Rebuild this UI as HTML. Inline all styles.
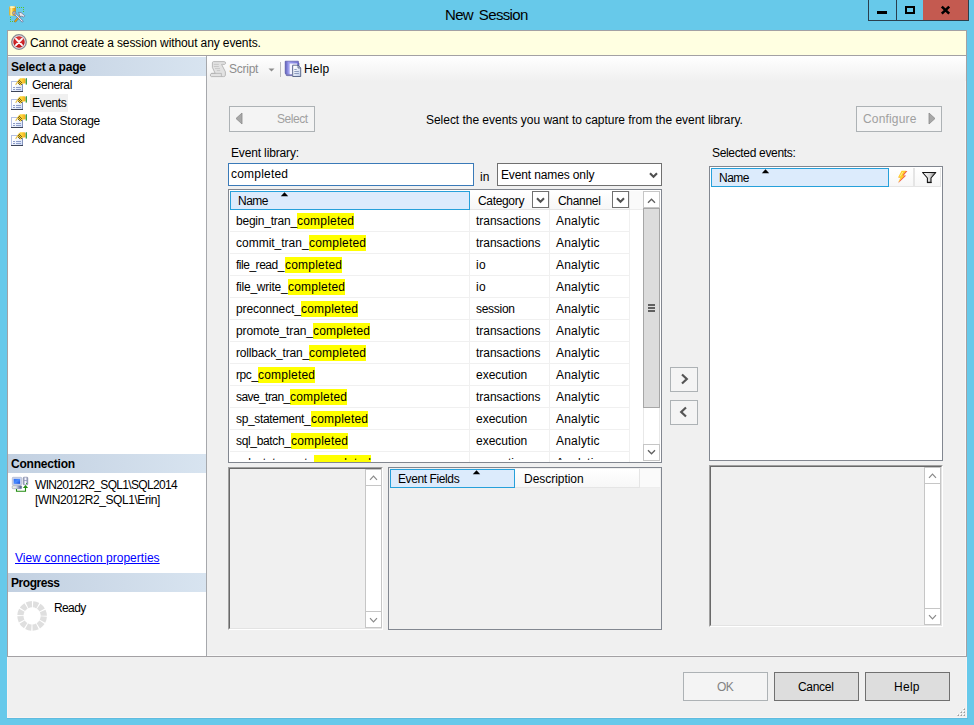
<!DOCTYPE html>
<html lang="en">
<head>
<meta charset="utf-8">
<title>New Session</title>
<style>
html,body{margin:0;padding:0;}
body{width:974px;height:725px;overflow:hidden;background:#67c9ea;font-family:"Liberation Sans",sans-serif;font-size:12px;color:#000;}
#win{position:relative;width:974px;height:725px;overflow:hidden;}
#win div,#win svg{position:absolute;box-sizing:border-box;}
#win .t{white-space:pre;line-height:20px;height:20px;}
#win .hdr{background:linear-gradient(to right,#c2d0e1,#d8e4f0);}
#win .hl{background:#ffff00;}
#win .btn{border:1px solid #707070;background:#dddddd;}
#win .btnd{border:1px solid #adb2b5;background:#f4f4f4;}
#win .hc{background:linear-gradient(#ffffff,#f7f7f7);border-right:1px solid #e5e5e5;border-bottom:1px solid #e5e5e5;}
#win .hsel{background:#dcebfc;border:1px solid #26a0da;}
#win .dd{border:1px solid #707070;background:#fff;}
#win .sunk{border:1px solid;border-color:#a0a0a0 #fff #fff #a0a0a0;background:#f0f0f0;}
#win .sunk2{border:1px solid;border-color:#696969 #e3e3e3 #e3e3e3 #696969;}

#win .sbb{background:#fff;border:1px solid #c6c6c6;}
</style>
</head>
<body>
<div id="win">
<div class="t" style="left:445px;top:5px;font-size:15px;letter-spacing:-0.65px;word-spacing:2.3px;">New Session</div>
<div style="left:868px;top:0px;width:101px;height:21px;border:1px solid #2a3f4d;border-top:none;"></div>
<div style="left:896px;top:0px;width:1px;height:20px;background:#2a3f4d;"></div>
<div style="left:923px;top:0px;width:45px;height:20px;background:#c45a50;"></div>
<div style="left:877px;top:11px;width:10px;height:3px;background:#000;"></div>
<div style="left:905px;top:6px;width:10px;height:8px;border:2px solid #000;border-top-width:2px;"></div>
<svg style="left:940px;top:5px" width="12" height="10" viewBox="0 0 12 10"><path d="M1.8 1.6 L9.2 8.6 M9.2 1.6 L1.8 8.6" stroke="#000" stroke-width="2.6" fill="none"/></svg>
<svg style="left:8px;top:5px" width="18" height="18" viewBox="8 5 18 18"><defs><linearGradient id="gcyl" x1="0" x2="1" y1="0" y2="0"><stop offset="0" stop-color="#e6a40a"/><stop offset="0.3" stop-color="#fff0a0"/><stop offset="0.6" stop-color="#f2bc28"/><stop offset="1" stop-color="#d08a00"/></linearGradient></defs><rect x="9.2" y="6.3" width="6.6" height="9.4" rx="1.3" fill="url(#gcyl)"/><ellipse cx="12.5" cy="7.1" rx="2.9" ry="0.9" fill="#fff6c4"/><rect x="17" y="7" width="1" height="1" fill="#58c22e"/><rect x="19" y="7" width="1" height="1" fill="#58c22e"/><rect x="21" y="7" width="1" height="1" fill="#58c22e"/><rect x="23" y="7" width="1" height="1" fill="#58c22e"/><rect x="23" y="9" width="1" height="1" fill="#58c22e"/><rect x="23" y="11" width="1" height="1" fill="#58c22e"/><rect x="10" y="17" width="1" height="1" fill="#58c22e"/><rect x="10" y="19" width="1" height="1" fill="#58c22e"/><rect x="10" y="21" width="1" height="1" fill="#58c22e"/><rect x="12" y="21" width="1" height="1" fill="#58c22e"/><path d="M15.2 21.3 L19.6 16.4" stroke="#7a5a10" stroke-width="2" stroke-linecap="round"/><path d="M15.2 21.3 L19.6 16.4" stroke="#f0b020" stroke-width="1.1" stroke-linecap="round"/><path d="M14.6 13.4 L22.3 21.2" stroke="#5a6890" stroke-width="2.2" stroke-linecap="round"/><path d="M14.8 13.6 L22.2 21.1" stroke="#eef0fa" stroke-width="1.1" stroke-linecap="round"/><circle cx="14.3" cy="13.1" r="1.7" fill="#aab4d4" stroke="#6a78a0" stroke-width="0.6"/><circle cx="14.4" cy="13.3" r="0.7" fill="#f0a018"/><path d="M18.4 12.4 q3 -0.6 4.6 1.8 l1.8 1.6 l-1.2 1.4 l-1.6 -1 q-1.6 0.6 -2.6 -0.6 q0.4 -1.8 -1 -3.2z" fill="#e8e8f0" stroke="#68708c" stroke-width="0.7"/></svg>
<div style="left:7px;top:30px;width:960px;height:627px;background:#f0f0f0;border:1px solid #a3a1a4;"></div>
<div style="left:7px;top:657px;width:960px;height:61px;background:#f0f0f0;border:1px solid #f9f3f2;border-top:none;"></div>
<div style="left:7px;top:718px;width:961px;height:1px;background:#5fbbdf;"></div>
<div style="left:7px;top:30px;width:960px;height:26px;background:#ffffe1;border:1px solid #a3a1a4;"></div>
<svg style="left:10px;top:33px" width="18" height="18" viewBox="10 33 18 18"><defs><radialGradient id="gerr" cx="0.5" cy="0.35" r="0.7"><stop offset="0" stop-color="#e44a4a"/><stop offset="1" stop-color="#b80808"/></radialGradient></defs><circle cx="19" cy="42" r="7.3" fill="#e4e4ea" stroke="#8a8a92" stroke-width="1.3"/><circle cx="19" cy="42" r="5.7" fill="url(#gerr)"/><path d="M16 38.8 L22 45.2 M22 38.8 L16 45.2" stroke="#fff" stroke-width="1.9" stroke-linecap="round"/></svg>
<div class="t" style="left:30px;top:33px;letter-spacing:-0.11px;">Cannot create a session without any events.</div>
<div style="left:8px;top:56px;width:198px;height:600px;background:#fff;"></div>
<div style="left:206px;top:56px;width:1px;height:601px;background:#a6a8ac;"></div>
<div class="hdr" style="left:8px;top:57px;width:198px;height:19px;"></div>
<div class="t" style="left:11px;top:57px;font-weight:700;letter-spacing:-0.14px;">Select a page</div>
<svg style="left:10px;top:77px" width="18" height="16" viewBox="10 77 18 16"><defs><linearGradient id="gpg0" x1="0" x2="1" y1="0" y2="1"><stop offset="0.3" stop-color="#ffffff"/><stop offset="1" stop-color="#ccdaf8"/></linearGradient><linearGradient id="ghd0" x1="0" x2="1" y1="0" y2="0"><stop offset="0" stop-color="#d8b040"/><stop offset="0.6" stop-color="#ffd83a"/><stop offset="1" stop-color="#f0a818"/></linearGradient></defs><g transform="translate(0 0)"><rect x="11.5" y="81.5" width="11" height="10" fill="url(#gpg0)" stroke="#b4c0e4" stroke-width="1"/><path d="M11 91.5 H23" stroke="#3c4458" stroke-width="1"/><path d="M22.5 84 V91" stroke="#8494bc" stroke-width="1"/><path d="M13 87.5h2M16 87.5h5M13 89.5h2M16 89.5h5" stroke="#8c9cc8" stroke-width="1"/><path d="M15.2 84.6 L18.6 79.6 L20.2 78.2 L24.6 78.2 L25.6 79.4 L25.6 83.2 L22.4 83.8 L20.6 85.8 L19.2 84 L17.4 83 L16.2 85 z" fill="url(#ghd0)"/><rect x="19" y="80" width="1" height="1" fill="#4a3c14" opacity="0.75"/><rect x="20" y="81" width="1" height="1" fill="#4a3c14" opacity="0.75"/><rect x="18" y="81" width="1" height="1" fill="#4a3c14" opacity="0.75"/><rect x="19" y="82" width="1" height="1" fill="#4a3c14" opacity="0.75"/><rect x="21" y="82" width="1" height="1" fill="#4a3c14" opacity="0.75"/><rect x="20" y="83" width="1" height="1" fill="#4a3c14" opacity="0.75"/><rect x="19" y="84" width="1" height="1" fill="#4a3c14" opacity="0.75"/><rect x="18" y="83" width="1" height="1" fill="#4a3c14" opacity="0.75"/><rect x="21" y="84" width="1" height="1" fill="#4a3c14" opacity="0.75"/><rect x="25.7" y="78.2" width="1.2" height="6.4" fill="#2a9636"/></g></svg>
<svg style="left:10px;top:95px" width="18" height="16" viewBox="10 95 18 16"><defs><linearGradient id="gpg1" x1="0" x2="1" y1="0" y2="1"><stop offset="0.3" stop-color="#ffffff"/><stop offset="1" stop-color="#ccdaf8"/></linearGradient><linearGradient id="ghd1" x1="0" x2="1" y1="0" y2="0"><stop offset="0" stop-color="#d8b040"/><stop offset="0.6" stop-color="#ffd83a"/><stop offset="1" stop-color="#f0a818"/></linearGradient></defs><g transform="translate(0 18)"><rect x="11.5" y="81.5" width="11" height="10" fill="url(#gpg1)" stroke="#b4c0e4" stroke-width="1"/><path d="M11 91.5 H23" stroke="#3c4458" stroke-width="1"/><path d="M22.5 84 V91" stroke="#8494bc" stroke-width="1"/><path d="M13 87.5h2M16 87.5h5M13 89.5h2M16 89.5h5" stroke="#8c9cc8" stroke-width="1"/><path d="M15.2 84.6 L18.6 79.6 L20.2 78.2 L24.6 78.2 L25.6 79.4 L25.6 83.2 L22.4 83.8 L20.6 85.8 L19.2 84 L17.4 83 L16.2 85 z" fill="url(#ghd1)"/><rect x="19" y="80" width="1" height="1" fill="#4a3c14" opacity="0.75"/><rect x="20" y="81" width="1" height="1" fill="#4a3c14" opacity="0.75"/><rect x="18" y="81" width="1" height="1" fill="#4a3c14" opacity="0.75"/><rect x="19" y="82" width="1" height="1" fill="#4a3c14" opacity="0.75"/><rect x="21" y="82" width="1" height="1" fill="#4a3c14" opacity="0.75"/><rect x="20" y="83" width="1" height="1" fill="#4a3c14" opacity="0.75"/><rect x="19" y="84" width="1" height="1" fill="#4a3c14" opacity="0.75"/><rect x="18" y="83" width="1" height="1" fill="#4a3c14" opacity="0.75"/><rect x="21" y="84" width="1" height="1" fill="#4a3c14" opacity="0.75"/><rect x="25.7" y="78.2" width="1.2" height="6.4" fill="#2a9636"/></g></svg>
<svg style="left:10px;top:113px" width="18" height="16" viewBox="10 113 18 16"><defs><linearGradient id="gpg2" x1="0" x2="1" y1="0" y2="1"><stop offset="0.3" stop-color="#ffffff"/><stop offset="1" stop-color="#ccdaf8"/></linearGradient><linearGradient id="ghd2" x1="0" x2="1" y1="0" y2="0"><stop offset="0" stop-color="#d8b040"/><stop offset="0.6" stop-color="#ffd83a"/><stop offset="1" stop-color="#f0a818"/></linearGradient></defs><g transform="translate(0 36)"><rect x="11.5" y="81.5" width="11" height="10" fill="url(#gpg2)" stroke="#b4c0e4" stroke-width="1"/><path d="M11 91.5 H23" stroke="#3c4458" stroke-width="1"/><path d="M22.5 84 V91" stroke="#8494bc" stroke-width="1"/><path d="M13 87.5h2M16 87.5h5M13 89.5h2M16 89.5h5" stroke="#8c9cc8" stroke-width="1"/><path d="M15.2 84.6 L18.6 79.6 L20.2 78.2 L24.6 78.2 L25.6 79.4 L25.6 83.2 L22.4 83.8 L20.6 85.8 L19.2 84 L17.4 83 L16.2 85 z" fill="url(#ghd2)"/><rect x="19" y="80" width="1" height="1" fill="#4a3c14" opacity="0.75"/><rect x="20" y="81" width="1" height="1" fill="#4a3c14" opacity="0.75"/><rect x="18" y="81" width="1" height="1" fill="#4a3c14" opacity="0.75"/><rect x="19" y="82" width="1" height="1" fill="#4a3c14" opacity="0.75"/><rect x="21" y="82" width="1" height="1" fill="#4a3c14" opacity="0.75"/><rect x="20" y="83" width="1" height="1" fill="#4a3c14" opacity="0.75"/><rect x="19" y="84" width="1" height="1" fill="#4a3c14" opacity="0.75"/><rect x="18" y="83" width="1" height="1" fill="#4a3c14" opacity="0.75"/><rect x="21" y="84" width="1" height="1" fill="#4a3c14" opacity="0.75"/><rect x="25.7" y="78.2" width="1.2" height="6.4" fill="#2a9636"/></g></svg>
<svg style="left:10px;top:131px" width="18" height="16" viewBox="10 131 18 16"><defs><linearGradient id="gpg3" x1="0" x2="1" y1="0" y2="1"><stop offset="0.3" stop-color="#ffffff"/><stop offset="1" stop-color="#ccdaf8"/></linearGradient><linearGradient id="ghd3" x1="0" x2="1" y1="0" y2="0"><stop offset="0" stop-color="#d8b040"/><stop offset="0.6" stop-color="#ffd83a"/><stop offset="1" stop-color="#f0a818"/></linearGradient></defs><g transform="translate(0 54)"><rect x="11.5" y="81.5" width="11" height="10" fill="url(#gpg3)" stroke="#b4c0e4" stroke-width="1"/><path d="M11 91.5 H23" stroke="#3c4458" stroke-width="1"/><path d="M22.5 84 V91" stroke="#8494bc" stroke-width="1"/><path d="M13 87.5h2M16 87.5h5M13 89.5h2M16 89.5h5" stroke="#8c9cc8" stroke-width="1"/><path d="M15.2 84.6 L18.6 79.6 L20.2 78.2 L24.6 78.2 L25.6 79.4 L25.6 83.2 L22.4 83.8 L20.6 85.8 L19.2 84 L17.4 83 L16.2 85 z" fill="url(#ghd3)"/><rect x="19" y="80" width="1" height="1" fill="#4a3c14" opacity="0.75"/><rect x="20" y="81" width="1" height="1" fill="#4a3c14" opacity="0.75"/><rect x="18" y="81" width="1" height="1" fill="#4a3c14" opacity="0.75"/><rect x="19" y="82" width="1" height="1" fill="#4a3c14" opacity="0.75"/><rect x="21" y="82" width="1" height="1" fill="#4a3c14" opacity="0.75"/><rect x="20" y="83" width="1" height="1" fill="#4a3c14" opacity="0.75"/><rect x="19" y="84" width="1" height="1" fill="#4a3c14" opacity="0.75"/><rect x="18" y="83" width="1" height="1" fill="#4a3c14" opacity="0.75"/><rect x="21" y="84" width="1" height="1" fill="#4a3c14" opacity="0.75"/><rect x="25.7" y="78.2" width="1.2" height="6.4" fill="#2a9636"/></g></svg>
<div style="left:30px;top:94px;width:38px;height:18px;background:#f0f0f0;"></div>
<div class="t" style="left:32px;top:75px;letter-spacing:-0.4px;">General</div>
<div class="t" style="left:32px;top:93px;letter-spacing:-0.38px;">Events</div>
<div class="t" style="left:32px;top:111px;letter-spacing:-0.22px;">Data Storage</div>
<div class="t" style="left:32px;top:129px;letter-spacing:-0.06px;">Advanced</div>
<div class="hdr" style="left:8px;top:454px;width:198px;height:19px;"></div>
<div class="t" style="left:11px;top:454px;font-weight:700;letter-spacing:-0.21px;">Connection</div>
<svg style="left:11px;top:476px" width="18" height="17" viewBox="11 476 18 17"><defs><linearGradient id="gscr" x1="0" x2="1" y1="0" y2="1"><stop offset="0" stop-color="#2a6cf4"/><stop offset="0.5" stop-color="#4a8cff"/><stop offset="1" stop-color="#1448d8"/></linearGradient><linearGradient id="gbase" x1="0" x2="1" y1="0" y2="0"><stop offset="0" stop-color="#f4f4d8"/><stop offset="0.4" stop-color="#dfe3f0"/><stop offset="1" stop-color="#3c4e80"/></linearGradient><linearGradient id="gtow" x1="0" x2="1" y1="0" y2="0"><stop offset="0" stop-color="#8890b0"/><stop offset="0.5" stop-color="#f4f4ff"/><stop offset="1" stop-color="#8088a8"/></linearGradient></defs><rect x="12.3" y="477.3" width="9.4" height="7.8" rx="0.8" fill="#ccd4ec" stroke="#a4acc8" stroke-width="0.6"/><rect x="13.7" y="478.9" width="6.4" height="4.9" fill="url(#gscr)"/><rect x="12.2" y="485.7" width="9.5" height="3" rx="0.8" fill="url(#gbase)" stroke="#7c88a8" stroke-width="0.5"/><rect x="23.2" y="477.2" width="4.6" height="7.6" rx="0.8" fill="url(#gtow)" stroke="#7880a0" stroke-width="0.6"/><path d="M24 480.5h3" stroke="#9098b8" stroke-width="0.8"/><rect x="26" y="483" width="1" height="1" fill="#3ab030"/><path d="M16.5 489 V491.3 H25.5 V486" stroke="#228c10" stroke-width="1.1" fill="none"/><path d="M22.9 488 L25.5 485 L28.1 488z" fill="#228c10"/></svg>
<div class="t" style="left:35px;top:475px;letter-spacing:-0.67px;">WIN2012R2_SQL1\SQL2014</div>
<div class="t" style="left:35px;top:490px;letter-spacing:-0.44px;">[WIN2012R2_SQL1\Erin]</div>
<div class="t" style="left:15px;top:548px;color:#0000ff;letter-spacing:0.03px;text-decoration:underline;">View connection properties</div>
<div class="hdr" style="left:8px;top:573px;width:198px;height:19px;"></div>
<div class="t" style="left:11px;top:573px;font-weight:700;letter-spacing:-0.44px;">Progress</div>
<svg style="left:16px;top:600px" width="32" height="32" viewBox="-16 -16 32 32"><circle cx="0.1" cy="-0.1" r="11.7" fill="none" stroke="#dfdfdf" stroke-width="6.2" stroke-dasharray="5.0 1.126" transform="rotate(2.8)"/></svg>
<div class="t" style="left:54px;top:598px;letter-spacing:-0.62px;">Ready</div>
<div style="left:207px;top:56px;width:759px;height:25px;background:linear-gradient(#ffffff,#f0f0f0);"></div>
<svg style="left:209px;top:60px" width="18" height="18" viewBox="209 60 18 18"><path d="M213.5 61.6 H224 Q226 61.8 225.6 63.6 Q225 64.8 222.6 64.4 L221.6 64.4 L225.4 71.8 V75.2 Q225.2 76.6 223.6 76.6 H211.2 Q210.2 76.4 210.4 74.8 Q210.6 73.4 211.8 73.4 H215.2 L212.4 67.4 V62.8 Q212.6 61.6 213.5 61.6z" fill="#e2e2e2" stroke="#b2b2b2" stroke-width="0.9" stroke-linejoin="round"/><path d="M213.8 64.4h5M213.8 66.5h5M215 68.6h5M216.8 70.6h3.4" stroke="#c2c2c2" stroke-width="0.8"/><path d="M211 73.4 H221.4 V76.4" stroke="#b2b2b2" stroke-width="0.8" fill="none"/></svg>
<div class="t" style="left:229px;top:59px;color:#8d8d8d;letter-spacing:-0.26px;">Script</div>
<svg style="left:268px;top:68px" width="7" height="4" viewBox="0 0 7 4"><path d="M0.5 0.5 h6 l-3 3z" fill="#8d8d8d"/></svg>
<div style="left:280px;top:62px;width:1px;height:15px;background:#bdbdbd;"></div>
<svg style="left:284px;top:60px" width="18" height="18" viewBox="284 60 18 18"><defs><linearGradient id="gbk" x1="0" x2="1" y1="0" y2="0"><stop offset="0" stop-color="#5e5eb8"/><stop offset="0.25" stop-color="#a0a0f0"/><stop offset="1" stop-color="#7070d0"/></linearGradient><linearGradient id="gdoc" x1="0" x2="1" y1="0" y2="1"><stop offset="0.2" stop-color="#ffffff"/><stop offset="1" stop-color="#b8c8e8"/></linearGradient></defs><path d="M285.2 61.2 H298.4 V63 H299 V70 H292 V74.4 H286.4 Q285.2 74.2 285.2 73z" fill="url(#gbk)" stroke="#4a4aa0" stroke-width="0.6"/><path d="M286 74.6 Q286 75.6 287 75.6 H292.4" stroke="#4a4a98" stroke-width="0.8" fill="none"/><path d="M289.6 63.4 H297.2 V66 H292.4 V74.2 H289.6z" fill="#f4f4ff"/><path d="M292.7 65.2 H298 L300.7 68 V76.5 H292.7z" fill="url(#gdoc)" stroke="#3c4c74" stroke-width="0.8" stroke-linejoin="round"/><path d="M298 65.2 V68 H300.7" fill="none" stroke="#3c4c74" stroke-width="0.7"/><path d="M294.3 69.5h2.4M294.3 71.5h4.6M294.3 73.5h4.6" stroke="#8494b8" stroke-width="0.9"/></svg>
<div class="t" style="left:304px;top:59px;letter-spacing:0.17px;">Help</div>
<div class="btnd" style="left:229px;top:106px;width:86px;height:26px;"></div>
<svg style="left:235px;top:112px" width="8" height="13" viewBox="0 0 8 13"><path d="M7 1 L1 6.5 L7 12z" fill="#a8a8a8" stroke="#8a8a8a" stroke-width="0.8"/></svg>
<div class="t" style="left:277px;top:109px;color:#a0a0a0;letter-spacing:-0.46px;">Select</div>
<div class="t" style="left:426px;top:110px;letter-spacing:-0.03px;">Select the events you want to capture from the event library.</div>
<div class="btnd" style="left:856px;top:106px;width:86px;height:26px;"></div>
<svg style="left:928px;top:112px" width="8" height="13" viewBox="0 0 8 13"><path d="M1 1 L7 6.5 L1 12z" fill="#a8a8a8" stroke="#8a8a8a" stroke-width="0.8"/></svg>
<div class="t" style="left:863px;top:109px;color:#a0a0a0;letter-spacing:0.16px;">Configure</div>
<div class="t" style="left:231px;top:143px;letter-spacing:-0.15px;">Event library:</div>
<div class="t" style="left:712px;top:143px;letter-spacing:-0.33px;">Selected events:</div>
<div style="left:228px;top:163px;width:246px;height:23px;background:#fff;border:1px solid #3a7ab8;"></div>
<div class="t" style="left:231px;top:164px;letter-spacing:0.21px;">completed</div>
<div class="t" style="left:480px;top:167px;letter-spacing:0.1px;">in</div>
<div style="left:497px;top:163px;width:165px;height:23px;background:#fff;border:1px solid #707070;"></div>
<div class="t" style="left:501px;top:165px;letter-spacing:-0.13px;">Event names only</div>
<svg style="left:649px;top:171.5px" width="9" height="7" viewBox="0 0 9 7"><path d="M1 1.2 L4.5 4.8 L8 1.2" stroke="#505050" stroke-width="2.1" fill="none"/></svg>
<div style="left:228px;top:189px;width:434px;height:274px;background:#fff;border:1px solid #828790;"></div>
<div style="left:230px;top:191px;width:413px;height:19px;background:#fafafa;border-bottom:1px solid #ededed;"></div>
<div class="hsel" style="left:230px;top:191px;width:240px;height:19px;"></div>
<div class="hc" style="left:470px;top:191px;width:80px;height:19px;"></div>
<div class="hc" style="left:550px;top:191px;width:80px;height:19px;"></div>
<div class="t" style="left:238px;top:191px;letter-spacing:-0.54px;">Name</div>
<div class="t" style="left:478px;top:191px;letter-spacing:-0.33px;">Category</div>
<div class="t" style="left:558px;top:191px;letter-spacing:-0.3px;">Channel</div>
<svg style="left:280px;top:192px" width="9" height="5" viewBox="0 0 9 5"><path d="M0.8 4.2 L4.5 0.3 L8.2 4.2z" fill="#000"/></svg>
<div class="dd" style="left:532px;top:191px;width:17px;height:17px;"></div>
<svg style="left:536px;top:197px" width="9" height="7" viewBox="0 0 9 7"><path d="M1 1.2 L4.5 4.8 L8 1.2" stroke="#505050" stroke-width="2.0" fill="none"/></svg>
<div class="dd" style="left:612px;top:191px;width:17px;height:17px;"></div>
<svg style="left:616px;top:197px" width="9" height="7" viewBox="0 0 9 7"><path d="M1 1.2 L4.5 4.8 L8 1.2" stroke="#505050" stroke-width="2.0" fill="none"/></svg>
<div style="left:229px;top:210px;width:414px;height:252px;overflow:hidden;">
<div style="left:1px;top:21px;width:400px;height:1px;background:#f0f0f0;"></div>
<div style="left:1px;top:43px;width:400px;height:1px;background:#f0f0f0;"></div>
<div style="left:1px;top:65px;width:400px;height:1px;background:#f0f0f0;"></div>
<div style="left:1px;top:87px;width:400px;height:1px;background:#f0f0f0;"></div>
<div style="left:1px;top:109px;width:400px;height:1px;background:#f0f0f0;"></div>
<div style="left:1px;top:131px;width:400px;height:1px;background:#f0f0f0;"></div>
<div style="left:1px;top:153px;width:400px;height:1px;background:#f0f0f0;"></div>
<div style="left:1px;top:175px;width:400px;height:1px;background:#f0f0f0;"></div>
<div style="left:1px;top:197px;width:400px;height:1px;background:#f0f0f0;"></div>
<div style="left:1px;top:219px;width:400px;height:1px;background:#f0f0f0;"></div>
<div style="left:1px;top:241px;width:400px;height:1px;background:#f0f0f0;"></div>
<div style="left:1px;top:263px;width:400px;height:1px;background:#f0f0f0;"></div>
<div style="left:240px;top:0px;width:1px;height:252px;background:#f0f0f0;"></div>
<div style="left:320px;top:0px;width:1px;height:252px;background:#f0f0f0;"></div>
<div style="left:400px;top:0px;width:1px;height:252px;background:#f0f0f0;"></div>
</div>
<div style="left:0;top:0;width:974px;height:462px;overflow:hidden;">
<div class="hl" style="left:297px;top:213px;width:57px;height:16px;"></div>
<div class="hl" style="left:309px;top:235px;width:57px;height:16px;"></div>
<div class="hl" style="left:285px;top:257px;width:57px;height:16px;"></div>
<div class="hl" style="left:288px;top:279px;width:57px;height:16px;"></div>
<div class="hl" style="left:301px;top:301px;width:57px;height:16px;"></div>
<div class="hl" style="left:313px;top:323px;width:57px;height:16px;"></div>
<div class="hl" style="left:309px;top:345px;width:57px;height:16px;"></div>
<div class="hl" style="left:258px;top:367px;width:57px;height:16px;"></div>
<div class="hl" style="left:290px;top:389px;width:57px;height:16px;"></div>
<div class="hl" style="left:311px;top:411px;width:57px;height:16px;"></div>
<div class="hl" style="left:291px;top:433px;width:57px;height:16px;"></div>
<div class="hl" style="left:314px;top:455px;width:57px;height:16px;"></div>
</div>
<div style="left:0;top:0;width:974px;height:460px;overflow:hidden;">
<div class="t" style="left:236px;top:211px;letter-spacing:-0.22px;">begin_tran_</div>
<div class="t" style="left:297px;top:211px;letter-spacing:0.21px;">completed</div>
<div class="t" style="left:476px;top:211px;letter-spacing:-0.02px;">transactions</div>
<div class="t" style="left:556px;top:211px;letter-spacing:0.22px;">Analytic</div>
<div class="t" style="left:236px;top:233px;letter-spacing:-0.01px;">commit_tran_</div>
<div class="t" style="left:309px;top:233px;letter-spacing:0.21px;">completed</div>
<div class="t" style="left:476px;top:233px;letter-spacing:-0.02px;">transactions</div>
<div class="t" style="left:556px;top:233px;letter-spacing:0.22px;">Analytic</div>
<div class="t" style="left:236px;top:255px;letter-spacing:-0.48px;">file_read_</div>
<div class="t" style="left:285px;top:255px;letter-spacing:0.21px;">completed</div>
<div class="t" style="left:476px;top:255px;letter-spacing:0.45px;">io</div>
<div class="t" style="left:556px;top:255px;letter-spacing:0.22px;">Analytic</div>
<div class="t" style="left:236px;top:277px;letter-spacing:-0.23px;">file_write_</div>
<div class="t" style="left:288px;top:277px;letter-spacing:0.21px;">completed</div>
<div class="t" style="left:476px;top:277px;letter-spacing:0.45px;">io</div>
<div class="t" style="left:556px;top:277px;letter-spacing:0.22px;">Analytic</div>
<div class="t" style="left:236px;top:299px;letter-spacing:-0.11px;">preconnect_</div>
<div class="t" style="left:301px;top:299px;letter-spacing:0.21px;">completed</div>
<div class="t" style="left:476px;top:299px;letter-spacing:-0.28px;">session</div>
<div class="t" style="left:556px;top:299px;letter-spacing:0.22px;">Analytic</div>
<div class="t" style="left:236px;top:321px;letter-spacing:-0.09px;">promote_tran_</div>
<div class="t" style="left:313px;top:321px;letter-spacing:0.21px;">completed</div>
<div class="t" style="left:476px;top:321px;letter-spacing:-0.02px;">transactions</div>
<div class="t" style="left:556px;top:321px;letter-spacing:0.22px;">Analytic</div>
<div class="t" style="left:236px;top:343px;letter-spacing:-0.17px;">rollback_tran_</div>
<div class="t" style="left:309px;top:343px;letter-spacing:0.21px;">completed</div>
<div class="t" style="left:476px;top:343px;letter-spacing:-0.02px;">transactions</div>
<div class="t" style="left:556px;top:343px;letter-spacing:0.22px;">Analytic</div>
<div class="t" style="left:236px;top:365px;letter-spacing:-0.4px;">rpc_</div>
<div class="t" style="left:258px;top:365px;letter-spacing:0.21px;">completed</div>
<div class="t" style="left:476px;top:365px;letter-spacing:-0.02px;">execution</div>
<div class="t" style="left:556px;top:365px;letter-spacing:0.22px;">Analytic</div>
<div class="t" style="left:236px;top:387px;letter-spacing:-0.58px;">save_tran_</div>
<div class="t" style="left:290px;top:387px;letter-spacing:0.21px;">completed</div>
<div class="t" style="left:476px;top:387px;letter-spacing:-0.02px;">transactions</div>
<div class="t" style="left:556px;top:387px;letter-spacing:0.22px;">Analytic</div>
<div class="t" style="left:236px;top:409px;letter-spacing:-0.34px;">sp_statement_</div>
<div class="t" style="left:311px;top:409px;letter-spacing:0.21px;">completed</div>
<div class="t" style="left:476px;top:409px;letter-spacing:-0.02px;">execution</div>
<div class="t" style="left:556px;top:409px;letter-spacing:0.22px;">Analytic</div>
<div class="t" style="left:236px;top:431px;letter-spacing:-0.34px;">sql_batch_</div>
<div class="t" style="left:291px;top:431px;letter-spacing:0.21px;">completed</div>
<div class="t" style="left:476px;top:431px;letter-spacing:-0.02px;">execution</div>
<div class="t" style="left:556px;top:431px;letter-spacing:0.22px;">Analytic</div>
<div class="t" style="left:236px;top:453px;letter-spacing:-0.25px;">sql_statement_</div>
<div class="t" style="left:314px;top:453px;letter-spacing:0.21px;">completed</div>
<div class="t" style="left:476px;top:453px;letter-spacing:-0.02px;">execution</div>
<div class="t" style="left:556px;top:453px;letter-spacing:0.22px;">Analytic</div>
</div>
<div style="left:643px;top:191px;width:17px;height:270px;background:#fff;border-left:1px solid #e8e8e8;border-right:1px solid #e8e8e8;"></div>
<div class="sbb" style="left:643px;top:191px;width:17px;height:17px;"></div>
<svg style="left:647px;top:198px" width="9" height="7" viewBox="0 0 9 7"><path transform="rotate(180 4.5 3)" d="M1 1.2 L4.5 4.8 L8 1.2" stroke="#606060" stroke-width="1.3" fill="none"/></svg>
<div style="left:643px;top:208px;width:17px;height:200px;background:#dcdcdc;border:1px solid #a6a6a6;"></div>
<div style="left:648px;top:304px;width:7px;height:2px;background:#606060;"></div>
<div style="left:648px;top:307px;width:7px;height:2px;background:#606060;"></div>
<div style="left:648px;top:310px;width:7px;height:2px;background:#606060;"></div>
<div class="sbb" style="left:643px;top:444px;width:17px;height:17px;"></div>
<svg style="left:647px;top:449px" width="9" height="7" viewBox="0 0 9 7"><path d="M1 1.2 L4.5 4.8 L8 1.2" stroke="#606060" stroke-width="1.3" fill="none"/></svg>
<div class="btnd" style="left:670px;top:367px;width:28px;height:25px;"></div>
<svg style="left:680px;top:373px" width="9" height="12" viewBox="0 0 9 12"><path d="M2 1.5 L6.8 6 L2 10.5" stroke="#555" stroke-width="2.2" fill="none"/></svg>
<div class="btnd" style="left:670px;top:400px;width:28px;height:25px;"></div>
<svg style="left:679px;top:406px" width="9" height="12" viewBox="0 0 9 12"><path d="M7 1.5 L2.2 6 L7 10.5" stroke="#555" stroke-width="2.2" fill="none"/></svg>
<div style="left:709px;top:166px;width:234px;height:295px;background:#fff;border:1px solid #828790;"></div>
<div style="left:711px;top:168px;width:230px;height:19px;background:#fafafa;border-bottom:1px solid #ededed;"></div>
<div class="hsel" style="left:711px;top:168px;width:178px;height:19px;"></div>
<div class="hc" style="left:889px;top:168px;width:26px;height:19px;border-right-width:2px;"></div>
<div class="hc" style="left:915px;top:168px;width:26px;height:19px;"></div>
<div class="t" style="left:719px;top:168px;letter-spacing:-0.54px;">Name</div>
<svg style="left:761px;top:169px" width="9" height="5" viewBox="0 0 9 5"><path d="M0.8 4.2 L4.5 0.3 L8.2 4.2z" fill="#000"/></svg>
<svg style="left:896px;top:169px" width="14" height="16" viewBox="896 169 14 16"><path d="M902.6 171 H907.4 L903.6 175.6 H906.2 L898.2 183.2 L901.6 177.6 H898.6z" fill="#f0584c"/><path d="M901.6 170.8 H906.2 L902.4 175.4 H904.8 L898 182.6 L900.6 177.4 H898z" fill="#ffcf28"/><path d="M900.2 176.4 l2.6 -4.6" stroke="#fff4b0" stroke-width="0.8"/></svg>
<svg style="left:921px;top:170px" width="17" height="15" viewBox="921 170 17 15"><defs><linearGradient id="gfun" x1="0" x2="1" y1="0" y2="0"><stop offset="0" stop-color="#ffffff"/><stop offset="0.55" stop-color="#d8d8d8"/><stop offset="1" stop-color="#6a6a6a"/></linearGradient></defs><path d="M922.6 172.5 H935.8 L931 178 V182.4 H927.4 V178z" fill="url(#gfun)" stroke="#141414" stroke-width="1.1" stroke-linejoin="round"/><path d="M927 182.6 H931.6" stroke="#141414" stroke-width="1"/></svg>
<div class="sunk" style="left:228px;top:467px;width:155px;height:163px;"></div>
<div class="sunk2" style="left:229px;top:468px;width:153px;height:161px;"></div>
<div style="left:365px;top:469px;width:17px;height:159px;background:#fff;border-left:1px solid #c6c6c6;border-right:1px solid #c6c6c6;"></div>
<div class="sbb" style="left:365px;top:469px;width:17px;height:17px;"></div>
<svg style="left:369px;top:475px" width="9" height="7" viewBox="0 0 9 7"><path transform="rotate(180 4.5 3)" d="M1 1.2 L4.5 4.8 L8 1.2" stroke="#8a8a8a" stroke-width="1.2" fill="none"/></svg>
<div class="sbb" style="left:365px;top:611px;width:17px;height:17px;"></div>
<svg style="left:369px;top:617px" width="9" height="7" viewBox="0 0 9 7"><path d="M1 1.2 L4.5 4.8 L8 1.2" stroke="#8a8a8a" stroke-width="1.2" fill="none"/></svg>
<div style="left:388px;top:467px;width:274px;height:163px;background:#f0f0f0;border:1px solid #828790;"></div>
<div style="left:390px;top:469px;width:270px;height:19px;background:#fafafa;border-bottom:1px solid #ededed;"></div>
<div class="hsel" style="left:390px;top:469px;width:125px;height:19px;"></div>
<div class="hc" style="left:515px;top:469px;width:125px;height:19px;"></div>
<div class="t" style="left:398px;top:469px;letter-spacing:-0.4px;">Event Fields</div>
<div class="t" style="left:524px;top:469px;letter-spacing:-0.04px;">Description</div>
<svg style="left:472px;top:470px" width="9" height="5" viewBox="0 0 9 5"><path d="M0.8 4.2 L4.5 0.3 L8.2 4.2z" fill="#000"/></svg>
<div class="sunk" style="left:709px;top:465px;width:234px;height:162px;"></div>
<div class="sunk2" style="left:710px;top:466px;width:232px;height:160px;"></div>
<div style="left:924px;top:467px;width:17px;height:158px;background:#fff;border-left:1px solid #c6c6c6;border-right:1px solid #c6c6c6;"></div>
<div class="sbb" style="left:924px;top:467px;width:17px;height:17px;"></div>
<svg style="left:928px;top:473px" width="9" height="7" viewBox="0 0 9 7"><path transform="rotate(180 4.5 3)" d="M1 1.2 L4.5 4.8 L8 1.2" stroke="#8a8a8a" stroke-width="1.2" fill="none"/></svg>
<div class="sbb" style="left:924px;top:608px;width:17px;height:17px;"></div>
<svg style="left:928px;top:614px" width="9" height="7" viewBox="0 0 9 7"><path d="M1 1.2 L4.5 4.8 L8 1.2" stroke="#8a8a8a" stroke-width="1.2" fill="none"/></svg>
<div style="left:8px;top:656px;width:958px;height:1px;background:#a3a1a4;"></div>
<div style="left:207px;top:655px;width:759px;height:1px;background:#f8f8f8;"></div>
<div style="left:965px;top:81px;width:1px;height:575px;background:#f8f8f8;"></div>
<div class="btnd" style="left:683px;top:672px;width:85px;height:29px;"></div>
<div class="t" style="left:717px;top:677px;color:#838383;letter-spacing:-0.7px;">OK</div>
<div class="btn" style="left:774px;top:672px;width:85px;height:29px;"></div>
<div class="t" style="left:798px;top:677px;letter-spacing:-0.3px;">Cancel</div>
<div class="btn" style="left:865px;top:672px;width:85px;height:29px;"></div>
<div class="t" style="left:894px;top:677px;letter-spacing:0.27px;">Help</div>
<div style="left:963px;top:714px;width:1px;height:1px;background:#fff;"></div>
<div style="left:964px;top:715px;width:1px;height:1px;background:#9c9c9c;"></div>
<div style="left:964px;top:714px;width:1px;height:1px;background:#c8c8c8;"></div>
<div style="left:963px;top:715px;width:1px;height:1px;background:#c8c8c8;"></div>
<div style="left:960px;top:714px;width:1px;height:1px;background:#fff;"></div>
<div style="left:961px;top:715px;width:1px;height:1px;background:#9c9c9c;"></div>
<div style="left:961px;top:714px;width:1px;height:1px;background:#c8c8c8;"></div>
<div style="left:960px;top:715px;width:1px;height:1px;background:#c8c8c8;"></div>
<div style="left:957px;top:714px;width:1px;height:1px;background:#fff;"></div>
<div style="left:958px;top:715px;width:1px;height:1px;background:#9c9c9c;"></div>
<div style="left:958px;top:714px;width:1px;height:1px;background:#c8c8c8;"></div>
<div style="left:957px;top:715px;width:1px;height:1px;background:#c8c8c8;"></div>
<div style="left:963px;top:711px;width:1px;height:1px;background:#fff;"></div>
<div style="left:964px;top:712px;width:1px;height:1px;background:#9c9c9c;"></div>
<div style="left:964px;top:711px;width:1px;height:1px;background:#c8c8c8;"></div>
<div style="left:963px;top:712px;width:1px;height:1px;background:#c8c8c8;"></div>
<div style="left:960px;top:711px;width:1px;height:1px;background:#fff;"></div>
<div style="left:961px;top:712px;width:1px;height:1px;background:#9c9c9c;"></div>
<div style="left:961px;top:711px;width:1px;height:1px;background:#c8c8c8;"></div>
<div style="left:960px;top:712px;width:1px;height:1px;background:#c8c8c8;"></div>
<div style="left:963px;top:708px;width:1px;height:1px;background:#fff;"></div>
<div style="left:964px;top:709px;width:1px;height:1px;background:#9c9c9c;"></div>
<div style="left:964px;top:708px;width:1px;height:1px;background:#c8c8c8;"></div>
<div style="left:963px;top:709px;width:1px;height:1px;background:#c8c8c8;"></div>
</div>
</body>
</html>
